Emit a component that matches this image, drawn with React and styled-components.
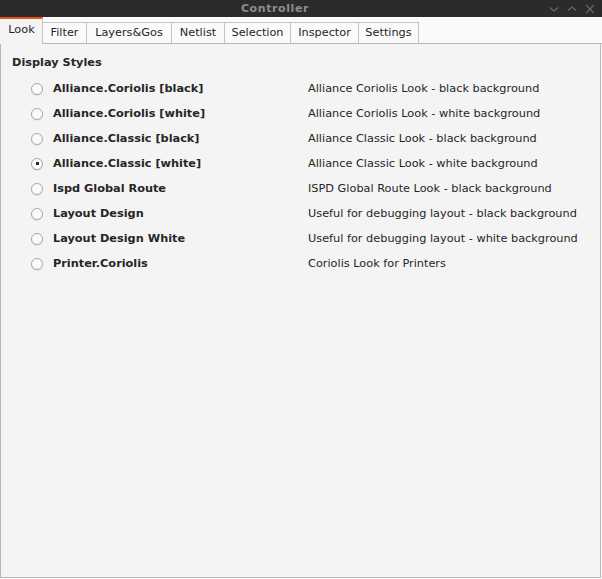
import React from 'react';
import styled, { createGlobalStyle } from 'styled-components';

const GlobalStyle = createGlobalStyle`
  html, body {
    margin: 0;
    padding: 0;
    background: #f4f4f4;
  }
  body {
    font-family: "DejaVu Sans", sans-serif;
    font-size: 11px;
    color: #262626;
  }
`;

const Window = styled.div`
  width: 602px;
  height: 579px;
  display: flex;
  flex-direction: column;
  background: #fafafa;
  overflow: hidden;
`;

const TitleBar = styled.div`
  height: 17px;
  background: #2b2b2b;
  display: flex;
  align-items: center;
`;

const Title = styled.div`
  flex: 1;
  text-align: center;
  font-weight: bold;
  font-size: 11px;
  letter-spacing: 0.6px;
  color: #8d8d8d;
  padding-left: 2px;
`;

const Controls = styled.div`
  display: flex;
  gap: 6px;
  padding-right: 6px;
  align-items: center;
`;

const TabBar = styled.div`
  display: flex;
  align-items: flex-end;
  height: 26px;
  border-bottom: 1px solid #b8b8b8;
`;

const Tab = styled.div`
  width: ${(p) => p.$width}px;
  height: ${(p) => (p.$active ? '27px' : '21px')};
  padding-bottom: ${(p) => (p.$active ? '4px' : '2px')};
  padding-left: ${(p) => (p.$active ? '1px' : '0')};
  display: flex;
  align-items: center;
  justify-content: center;
  font-size: 11.3px;
  color: #262626;
  background: ${(p) => (p.$active ? '#f4f4f4' : '#fafafa')};
  border: 1px solid #c4c4c4;
  border-bottom: none;
  border-left: ${(p) => (p.$active ? 'none' : '1px solid #c4c4c4')};
  border-top: ${(p) => (p.$active ? '2px solid #e4541b' : '1px solid #c4c4c4')};
  margin-bottom: ${(p) => (p.$active ? '-1px' : '0')};
  margin-left: ${(p) => (p.$active ? '0' : '-1px')};
  box-sizing: border-box;
  position: relative;
  z-index: ${(p) => (p.$active ? 1 : 0)};
  white-space: nowrap;
`;

const Panel = styled.div`
  flex: 1;
  background: #f4f4f4;
  border-left: 1px solid #b8b8b8;
  border-right: 1px solid #b8b8b8;
  border-bottom: 1px solid #b8b8b8;
  margin-right: 1px;
  margin-bottom: 1px;
  padding: 10px 0 0 11px;
`;

const SectionTitle = styled.div`
  font-weight: bold;
  font-size: 11.3px;
  height: 17px;
  line-height: 17px;
  margin-bottom: 5px;
`;

const List = styled.div`
  display: flex;
  flex-direction: column;
`;

const Row = styled.div`
  display: grid;
  grid-template-columns: 22px 255px 1fr;
  align-items: center;
  height: 25px;
  padding-left: 19px;
`;

const Radio = styled.span`
  width: 10px;
  height: 10px;
  border-radius: 50%;
  border: 1px solid #a8a8a8;
  background: #fbfbfb;
  box-shadow: 0 1px 1px rgba(0, 0, 0, 0.08);
  display: flex;
  align-items: center;
  justify-content: center;
  &::after {
    content: '';
    width: 3px;
    height: 3px;
    background: #2a2a2a;
    display: ${(p) => (p.$checked ? 'block' : 'none')};
  }
`;

const Label = styled.span`
  font-weight: bold;
  font-size: 11.3px;
  white-space: nowrap;
`;

const Description = styled.span`
  font-size: 11.3px;
  white-space: nowrap;
`;

const tabs = [
  ['Look', 43],
  ['Filter', 45],
  ['Layers&Gos', 86],
  ['Netlist', 54],
  ['Selection', 67],
  ['Inspector', 69],
  ['Settings', 61],
];

const styles = [
  ['Alliance.Coriolis [black]', 'Alliance Coriolis Look - black background'],
  ['Alliance.Coriolis [white]', 'Alliance Coriolis Look - white background'],
  ['Alliance.Classic [black]', 'Alliance Classic Look - black background'],
  ['Alliance.Classic [white]', 'Alliance Classic Look - white background', true],
  ['Ispd Global Route', 'ISPD Global Route Look - black background'],
  ['Layout Design', 'Useful for debugging layout - black background'],
  ['Layout Design White', 'Useful for debugging layout - white background'],
  ['Printer.Coriolis', 'Coriolis Look for Printers'],
];

const WinIcon = ({ d }) => (
  <svg width="12" height="12" viewBox="0 0 12 12">
    <path d={d} stroke="#6a6a6a" strokeWidth="1.2" fill="none" />
  </svg>
);

export default function App() {
  return (
    <Window>
      <GlobalStyle />
      <TitleBar>
        <Title>Controller</Title>
        <Controls>
          <WinIcon d="M2 4.5 L6 8 L10 4.5" />
          <WinIcon d="M2 7.5 L6 4 L10 7.5" />
          <WinIcon d="M2 2 L10 10 M10 2 L2 10" />
        </Controls>
      </TitleBar>
      <TabBar>
        {tabs.map(([t, w], i) => (
          <Tab key={t} $active={i === 0} $width={w}>
            {t}
          </Tab>
        ))}
      </TabBar>
      <Panel>
        <SectionTitle>Display Styles</SectionTitle>
        <List>
          {styles.map(([name, desc, checked]) => (
            <Row key={name}>
              <Radio $checked={checked} />
              <Label>{name}</Label>
              <Description>{desc}</Description>
            </Row>
          ))}
        </List>
      </Panel>
    </Window>
  );
}
